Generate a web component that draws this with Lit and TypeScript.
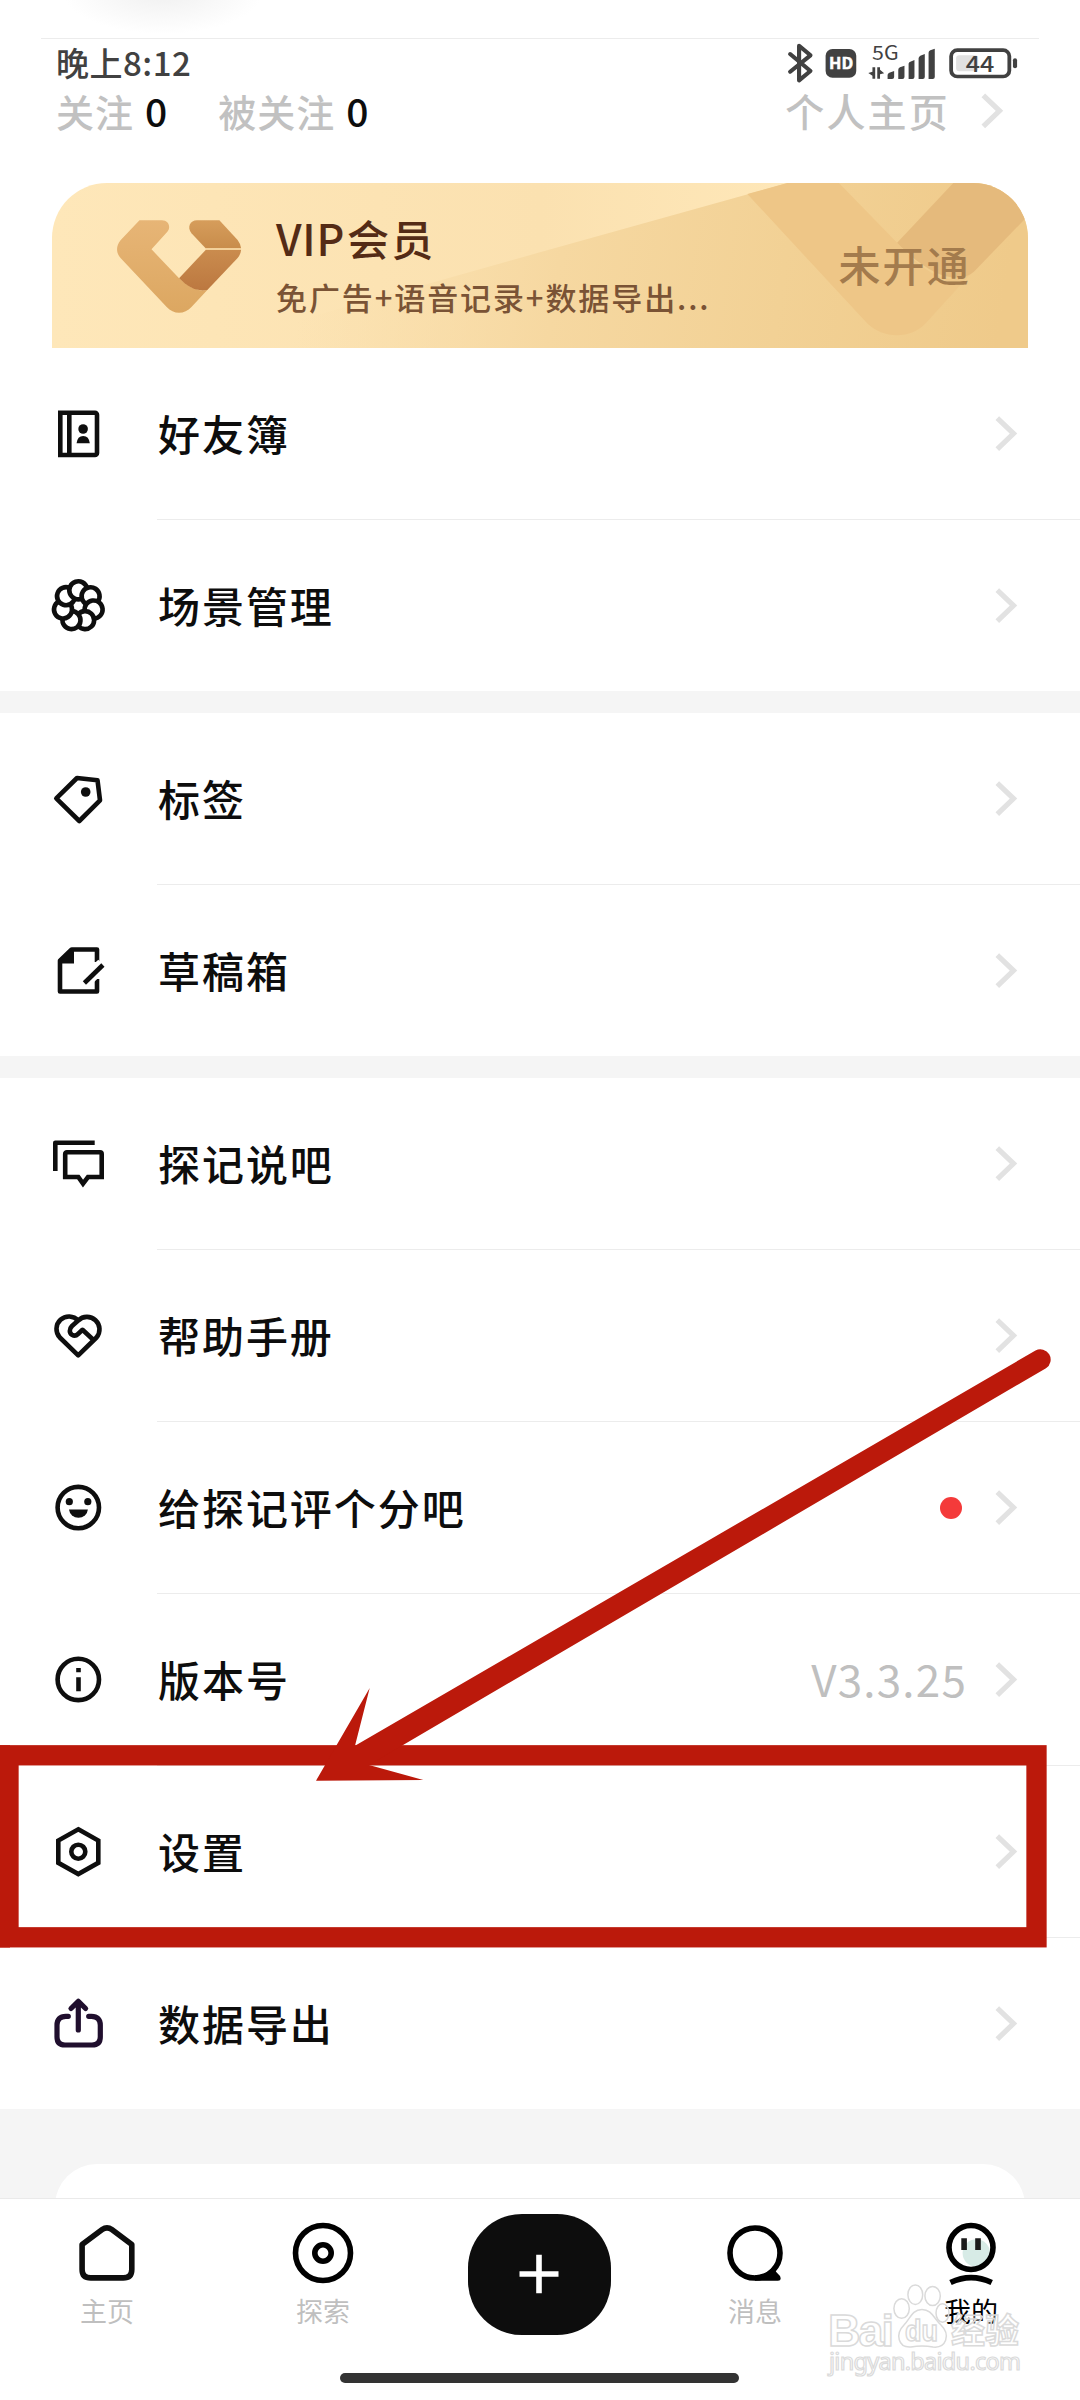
import { LitElement, html, css, svg, nothing } from "lit";
import { customElement, property } from "lit/decorators.js";

const FONT = css`"Noto Sans CJK SC", "Noto Sans", sans-serif`;

// Petal centres sit 15.7 from the middle; each arc stops where the next petal begins.
const petals = [0, 1, 2, 3, 4, 5, 6].map(
  (i) => svg`<path transform="rotate(${(i * 360) / 7} 30.3 30) translate(30.3 14.3)" d="M3.6 8.25A9 9 0 1 1 8.7 -2.35" />`
);

const icons: Record<string, unknown> = {
  book: svg`<path d="M12.3 8.8H47a2 2 0 0 1 2 2V49a2 2 0 0 1-2 2H12.3z M21.3 9v42" />
    <g class="solid"><circle cx="35.1" cy="25" r="4.8" /><path d="M28.6 39.3Q29.4 32 35.2 32Q41 32 41.8 39.3z" /></g>`,
  flower: svg`${petals}`,
  tag: svg`<path stroke-linejoin="round" d="M29 9L49.5 11.3L52 31.4L31.3 52L8.3 29.4z" /><circle class="solid" cx="37.7" cy="23" r="4.8" />`,
  draft: svg`<path stroke-linejoin="round" d="M49 21V8.5H23.7L12 19.7V50.5H49V38" />
    <path class="solid" d="M11 22.4L24 8V22.4z M24 8h2v14.4h-2z" />
    <path class="wipe" d="M57 27L40 43.5M52 20.5L45 27" /><path d="M54.9 24L36.4 42" />`,
  chat: svg`<path stroke-linejoin="round" d="M46.7 8.7H7.3V37" />
    <path d="M19 18.3H52a1.7 1.7 0 0 1 1.7 1.7V43H40L35 49.6L30.3 43H17.2V20a1.7 1.7 0 0 1 1.8-1.7z" />`,
  heart: svg`<path stroke-linejoin="round" d="M30.2 14.5A12.5 12.5 0 0 0 11.8 31.5L30.2 49.4L48.5 31.5A12.5 12.5 0 0 0 30.2 14.5L24 20C21 23 21.2 27 24 28.8C26 30 28.5 29.5 30 28L34.5 23.8L45.5 34" />`,
  smile: svg`<circle cx="30.3" cy="29.6" r="20.7" />
    <g class="solid"><circle cx="21.3" cy="23.7" r="3.6" /><circle cx="39.8" cy="23.7" r="3.6" /><path d="M21 31.6H39.9A9.5 9.2 0 0 1 21 31.6z" /></g>`,
  info: svg`<circle cx="30.3" cy="29.4" r="20.7" /><path d="M30.5 18v4.3M30.5 27.3v14" />`,
  hex: svg`<path d="M30.3 7.3L50.3 18.5V40.8L30.3 52L10.3 40.8V18.5z" /><circle cx="30.3" cy="29.7" r="7" />`,
  share: svg`<g stroke-linecap="round" stroke-linejoin="round" stroke-width="5.2" stroke="#200f2e">
    <path d="M30.3 7.5V36M23 14.5L30.3 7.3L37.6 14.5" />
    <path d="M20.3 22.3h-2.5Q9 22.3 9 31v12Q9 51 17 51h27Q52.3 51 52.3 43V31Q52.3 22.3 43.5 22.3h-2.8" /></g>`,
};

@customElement("list-row")
export class ListRow extends LitElement {
  @property() icon = "";
  @property() label = "";
  @property() value = "";
  @property({ type: Boolean }) dot = false;
  @property({ type: Boolean }) last = false;

  static styles = css`
    :host { display: flex; }
    .icon { width: 60px; height: 60px; margin: 56px 49px 0 48px; flex: none; fill: none; stroke: #0e0e0e; stroke-width: 4.6; }
    .solid { fill: #0e0e0e; stroke: none; }
    .wipe { stroke: #fff; stroke-width: 5; }
    .body { flex: 1; height: 171px; display: flex; align-items: center; padding: 0 62px 0 1px; border-bottom: 1px solid #ececec; }
    .body.last { border-bottom: none; }
    .label { flex: 1; font-size: 42px; letter-spacing: 1.95px; font-weight: 500; color: #0d0d0d; line-height: 60px; padding-bottom: 2px; }
    .value { font-size: 44px; letter-spacing: 1.2px; color: #bfbfbf; line-height: 60px; padding-bottom: 4px; margin-right: 26px; }
    .dot { width: 22px; height: 22px; border-radius: 50%; background: #f43a3a; margin-right: 31px; }
    .chev { width: 25px; height: 38px; fill: none; stroke: #e2e2e2; stroke-width: 5.2; flex: none; }
  `;

  render() {
    return html`
      <svg class="icon" viewBox="0 0 60 60">${icons[this.icon]}</svg>
      <div class="body ${this.last ? "last" : ""}">
        <span class="label">${this.label}</span>
        ${this.value ? html`<span class="value">${this.value}</span>` : nothing}
        ${this.dot ? html`<span class="dot"></span>` : nothing}
        <svg class="chev" viewBox="0 0 25 38"><path d="M4.3 3.1L20.5 18.6L4.3 34.1" /></svg>
      </div>
    `;
  }
}

@customElement("vip-card")
export class VipCard extends LitElement {
  static styles = css`
    :host { display: block; position: relative; height: 165px; border-radius: 55px 55px 0 0; overflow: hidden; background: linear-gradient(90deg, #fee7b9, #fbe1b0 50%, #fee7b8 75%); }
    .art { position: absolute; left: 0; top: 0; }
    .content { position: relative; display: flex; height: 100%; align-items: center; padding: 0 57px 0 224px; }
    .copy { flex: 1; display: flex; flex-direction: column; padding-bottom: 5px; }
    .title { font-size: 42px; letter-spacing: 2.2px; font-weight: 500; line-height: 60px; color: #542b16; }
    .latin { letter-spacing: 0.8px; margin-right: 2px; font-size: 43px; }
    .desc { font-size: 31px; letter-spacing: 1.9px; font-weight: 500; line-height: 44px; margin-top: 7px; color: #7a5335; }
    .state { font-size: 42px; letter-spacing: 2.2px; font-weight: 500; line-height: 60px; color: #a37b4d; padding-bottom: 4px; }
  `;

  render() {
    return html`
      <svg class="art" width="976" height="165" viewBox="151 39 2834 495" preserveAspectRatio="none">
        <defs>
          <linearGradient id="lo" gradientUnits="userSpaceOnUse" x1="900" y1="200" x2="2900" y2="500">
            <stop offset="0" stop-color="#f8dca8" stop-opacity="0" /><stop offset=".36" stop-color="#f6d8a1" /><stop offset=".68" stop-color="#f2d195" /><stop offset="1" stop-color="#efca8a" />
          </linearGradient>
          <linearGradient id="a" x1="0" y1="0" x2="0" y2="1"><stop stop-color="#e7b576" /><stop offset="1" stop-color="#dca761" /></linearGradient>
          <linearGradient id="b" x1="0" y1="0" x2="0" y2="1"><stop stop-color="#d69d5b" /><stop offset="1" stop-color="#c88c4b" /></linearGradient>
          <linearGradient id="c" x1="0" y1="0" x2="0" y2="1"><stop stop-color="#ca8c4e" /><stop offset="1" stop-color="#bc7840" /></linearGradient>
        </defs>
        <path fill="url(#lo)" d="M560 540L1568 247L2288 39H2990V540z" />
        <path fill="#eec687" d="M2170 72L2286 39H2436L2605 218Q2700 330 2770 328L2818 312L2688 460C2645 508 2565 508 2518 460z" />
        <path fill="#e5ba7c" d="M2768 39H2990V132L2828 305C2780 345 2700 320 2605 218z" />
        <path fill="url(#a)" d="M405 151H470C490 151 497 172 486 185L440 238L520 325C550 352 575 366 602 360L556 411C536 434 504 434 484 411L350 264C337 250 336 228 350 211z" />
        <path fill="url(#b)" d="M637 151L690 210Q699 222 700 235H597L556 190C542 172 552 151 572 151z" />
        <path fill="url(#c)" d="M597 240H700Q699 253 690 264L602 360C570 366 545 350 520 325z" />
        <path fill="#f3d19a" d="M597 235H700V240H597z" />
      </svg>
      <div class="content">
        <div class="copy">
          <span class="title"><span class="latin">VIP</span>会员</span>
          <span class="desc">免广告+语音记录+数据导出...</span>
        </div>
        <span class="state">未开通</span>
      </div>
    `;
  }
}

interface Row { icon: string; label: string; value?: string; dot?: boolean }

const groups: Row[][] = [
  [{ icon: "book", label: "好友簿" }, { icon: "flower", label: "场景管理" }],
  [{ icon: "tag", label: "标签" }, { icon: "draft", label: "草稿箱" }],
  [
    { icon: "chat", label: "探记说吧" },
    { icon: "heart", label: "帮助手册" },
    { icon: "smile", label: "给探记评个分吧", dot: true },
    { icon: "info", label: "版本号", value: "V3.3.25" },
    { icon: "hex", label: "设置" },
    { icon: "share", label: "数据导出" },
  ],
];

const tabs = [
  {
    label: "主页",
    art: svg`<path stroke="#0e0e0e" stroke-linejoin="round" d="M31.2 12.6Q36 9 40.8 12.6L60.8 27.4V52.4Q60.8 60.9 52.2 60.9H19.8Q11.1 60.9 11.1 52.4V27.4z" />`,
  },
  {
    label: "探索",
    art: svg`<circle cx="36" cy="36" r="27.5" /><circle cx="36" cy="36" r="8.2" />`,
  },
  { label: "", art: nothing },
  {
    label: "消息",
    art: svg`<circle cx="36" cy="36" r="25" /><path fill="#000" stroke="none" d="M36 58.2C44 58.2 50 55.5 54.5 49L57 54.8L61 59Q63 63.8 59 63.8H36z" />`,
  },
  {
    label: "我的",
    art: svg`<circle cx="41.3" cy="36" r="13.7" fill="#d7ebe6" stroke="none" /><circle cx="36" cy="30.5" r="22" />
      <path stroke="#1a1a1a" d="M29.1 21.3V33M43 21.3V33" /><path d="M15.5 65.5Q36 55.8 56.7 65.5" />`,
  },
];

@customElement("app-root")
export class AppRoot extends LitElement {
  static styles = css`
    :host { display: block; position: relative; width: 1080px; height: 2400px; overflow: hidden; background: #fff; font-family: ${FONT}; }
    .page { display: flex; flex-direction: column; height: 2400px; }
    .peek { height: 38px; margin: 0 41px; border-bottom: 1px solid #ececec; background: radial-gradient(ellipse 100px 42px at 122px -8px, #f0f0f0, #fff); }
    .status { display: flex; justify-content: space-between; height: 47px; padding: 0 60px 0 56px; box-sizing: border-box; }
    .time { font-size: 33px; letter-spacing: 0.5px; font-weight: 500; line-height: 47px; color: #414141; }
    .sysicons { width: 234.2px; height: 46.7px; margin-top: 1.7px; fill: none; stroke: none; overflow: visible; }
    .stats { display: flex; height: 49px; align-items: center; padding: 0 76px 0 56px; line-height: 49px; }
    .k { font-size: 38px; letter-spacing: 1px; font-weight: 500; color: #c1c1c1; }
    .n { font-size: 39px; font-weight: 500; color: #0d0d0d; margin-left: 11px; padding-bottom: 1px; }
    .n + .k { margin-left: 51px; }
    .mine { margin-left: auto; font-size: 39px; letter-spacing: 2.2px; font-weight: 500; color: #c1c1c1; padding-bottom: 1px; }
    .chev { width: 25px; height: 38px; fill: none; stroke: #e2e2e2; stroke-width: 5.2; margin-left: 29px; }
    .vip { margin: 48px 52px 0; flex: none; }
    .lists { display: flex; flex-direction: column; gap: 22px; background: #f5f5f5; }
    .group { background: #fff; }
    .tail { flex: 1; background: #f5f5f5; padding: 55px 55px 0; overflow: hidden; }
    .sheet { height: 80px; background: #fff; border-radius: 42px 42px 0 0; }
    .nav { flex: none; height: 201px; border-top: 1px solid #eaeaea; background: #fff; display: flex; flex-direction: column; }
    .tabs { height: 174px; display: grid; grid-template-columns: repeat(5, 216px); margin-left: -1px; }
    .tab { display: flex; flex-direction: column; align-items: center; padding-top: 18px; }
    .tab svg { width: 72px; height: 72px; fill: none; stroke: #000; stroke-width: 5.6; }
    .cap { font-size: 27px; line-height: 38px; margin-top: 3px; color: #bfbfbf; }
    .cap.on { color: #000; }
    .fab { width: 143px; height: 121px; margin-top: -3px; border-radius: 54px; background: #0d0d0d; display: flex; align-items: center; justify-content: center; }
    .tab .plus { width: 40px; height: 40px; stroke: #fff; margin-bottom: 1px; }
    .bar { width: 399px; height: 10px; border-radius: 5px; background: #333; margin-left: 340px; }
    .overlay { position: absolute; left: 0; top: 0; pointer-events: none; }
    .mark { fill: #fff; stroke: #dadada; stroke-width: 1.5; fill-opacity: 0.35; }
  `;

  render() {
    return html`
      <div class="page">
        <div class="peek"></div>
        <div class="status">
          <span class="time">晚上8:12</span>
          <svg class="sysicons" viewBox="714 122 680 140" preserveAspectRatio="none">
            <path stroke="#414141" stroke-width="12" stroke-linecap="round" stroke-linejoin="round" d="M726 161L785 212L752 240V136L785 165L726 214" />
            <g fill="#414141">
              <rect x="829" y="146" width="89" height="86" rx="20" />
              <text x="964" y="178" font-size="59" textLength="77" lengthAdjust="spacingAndGlyphs">5G</text>
              <path d="M965 201h8v34h-8v-9l-12-8l12-4zM979 235v-34h8v7l12 11l-12 3v13z" />
              <path d="M1009 236V224Q1009 219 1014 217L1028 212V230Q1028 236 1022 236zM1040 236V208Q1040 204 1045 201L1058 196V230Q1058 236 1052 236zM1070 236V190Q1070 186 1075 184L1087 179V230Q1087 236 1081 236zM1099 236V174Q1099 169 1104 166L1117 161V230Q1117 236 1111 236zM1128 236V157Q1128 152 1133 150L1146 145V230Q1146 236 1140 236z" />
              <rect x="1373" y="174" width="12" height="30" rx="6" />
            </g>
            <text x="839" y="206" font-size="46" font-weight="700" fill="#fff" stroke="#fff" stroke-width="1.5" textLength="70" lengthAdjust="spacingAndGlyphs">HD</text>
            <rect x="1193.5" y="149.5" width="169" height="79" rx="18" stroke="#414141" stroke-width="11" />
            <rect x="1208" y="165" width="64" height="48" rx="9" fill="#e1e1e1" />
            <text x="1236" y="215" font-size="65" font-weight="500" fill="#414141" textLength="83" lengthAdjust="spacingAndGlyphs">44</text>
          </svg>
        </div>
        <div class="stats">
          <span class="k">关注</span><span class="n">0</span><span class="k">被关注</span><span class="n">0</span>
          <span class="mine">个人主页</span>
          <svg class="chev" viewBox="0 0 25 38"><path d="M4.3 3.3L20.5 18.8L4.3 34.3" /></svg>
        </div>
        <vip-card class="vip"></vip-card>
        <div class="lists">
          ${groups.map((g) => html`<div class="group">
            ${g.map((r, i) => html`<list-row .icon=${r.icon} .label=${r.label} .value=${r.value ?? ""} .dot=${!!r.dot} .last=${i === g.length - 1}></list-row>`)}
          </div>`)}
        </div>
        <div class="tail"><div class="sheet"></div></div>
        <div class="nav">
          <div class="tabs">
            ${tabs.map((t, i) => t.label
              ? html`<div class="tab"><svg viewBox="0 0 72 72">${t.art}</svg><span class="cap ${i === 4 ? "on" : ""}">${t.label}</span></div>`
              : html`<div class="tab"><div class="fab"><svg class="plus" viewBox="0 0 40 40"><path d="M0.5 20H39.5M20 0.8V39.2" /></svg></div></div>`)}
          </div>
          <div class="bar"></div>
        </div>
      </div>
      <svg class="overlay" width="1080" height="2400" viewBox="0 0 1080 2400">
        <rect x="8.5" y="1755.3" width="1028" height="182" fill="none" stroke="#bb190b" stroke-width="20.3" />
        <path fill="#bb190b" d="M0 1745.2H10V1947.5H0zM316 1780.7L369.7 1688L355 1745.8L1035.5 1350.5A10.3 10.3 0 0 1 1046 1368.2L369 1765L423.3 1780z" />
        <g class="mark">
          <text x="828" y="2345.5" font-size="45" font-weight="700" font-family="Liberation Sans, sans-serif" textLength="66">Bai</text>
          <ellipse cx="901.6" cy="2308.5" rx="7.7" ry="9.8" /><ellipse cx="915.3" cy="2294.7" rx="7.4" ry="9.8" /><ellipse cx="932.6" cy="2296" rx="7.7" ry="9.5" /><ellipse cx="942.5" cy="2313" rx="6.5" ry="9.2" />
          <path d="M922 2309.5C912 2309.5 910 2319 904 2325C895 2334 898 2348 911 2347C919 2345.5 925 2345.5 933 2347C946 2348.5 951 2335 941 2325C934 2319 932 2309.5 922 2309.5z" />
          <text x="905" y="2341" font-size="29" font-weight="700" font-family="Liberation Sans, sans-serif" textLength="33" lengthAdjust="spacingAndGlyphs">du</text>
          <text x="951" y="2342.5" font-size="34" font-weight="700" textLength="68">经验</text>
          <text x="829" y="2370" font-size="23.5" font-family="Noto Sans, sans-serif" textLength="192" stroke-width="1.2">jingyan.baidu.com</text>
        </g>
      </svg>
    `;
  }
}
